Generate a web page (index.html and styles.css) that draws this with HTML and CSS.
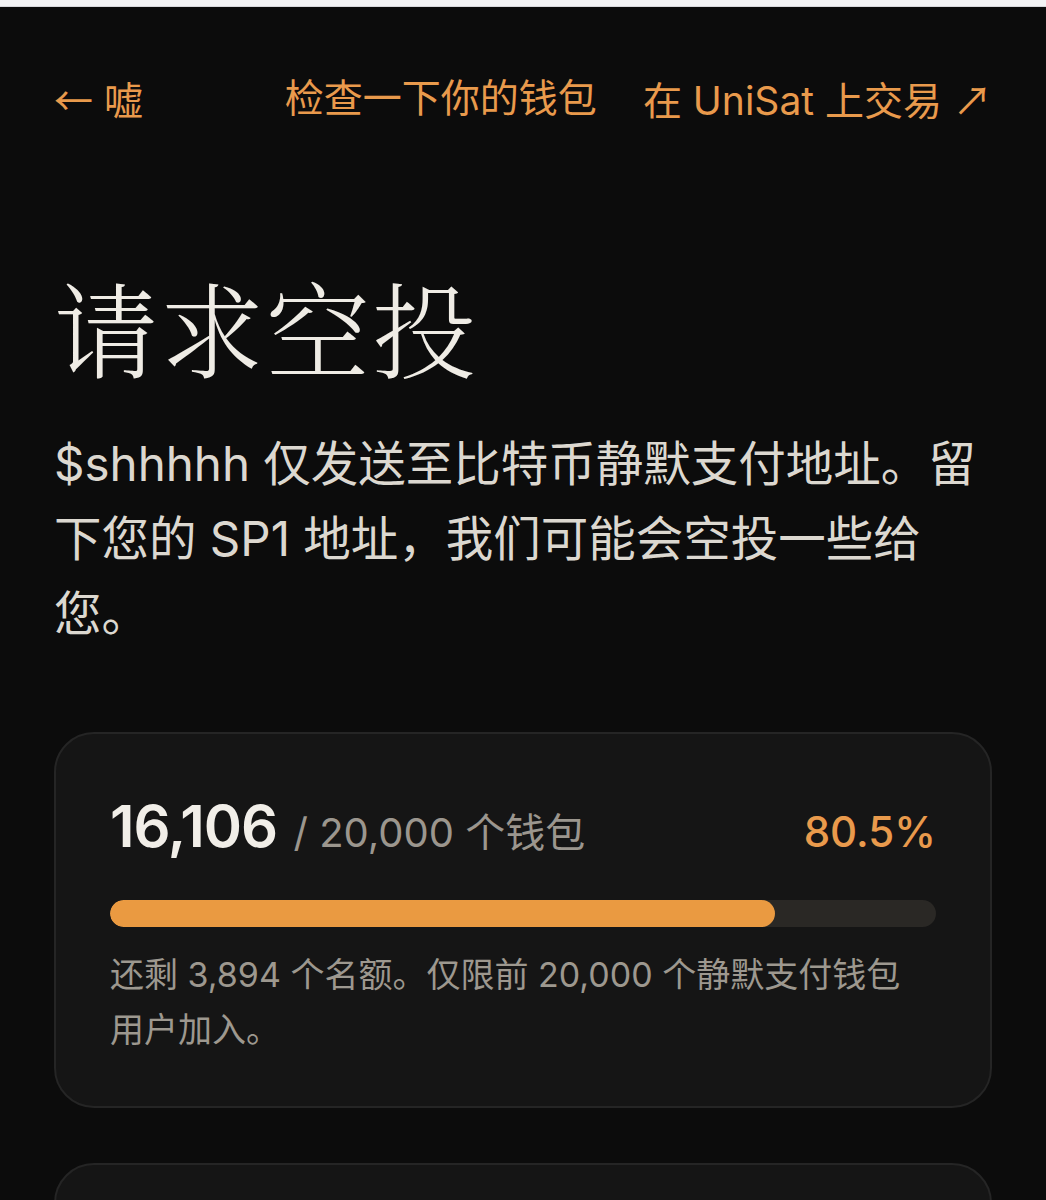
FILE: index.html
```html
<!DOCTYPE html>
<html lang="zh-CN">
<head>
    <meta charset="UTF-8">
    <meta name="viewport" content="width=device-width, initial-scale=1.0">
    <title>请求空投</title>
    <link rel="stylesheet" href="styles.css">
</head>
<body>
    <div class="top-strip"></div>
    <div class="page">
        <nav class="nav">
            <a class="nav-link" href="#"><span class="arrow">←</span> 嘘</a>
            <div class="nav-right">
                <a class="nav-link" href="#">检查一下你的钱包</a>
                <a class="nav-link" href="#">在 UniSat 上交易 <span class="arrow">↗</span></a>
            </div>
        </nav>

        <h1 class="title">请求空投</h1>
        <p class="intro">$shhhhh 仅发送至比特币静默支付地址。留下您的 SP1 地址，我们可能会空投一些给您。</p>

        <div class="card">
            <div class="count-row">
                <div class="count">
                    <span class="count-num">16,106</span>
                    <span class="count-total">/ 20,000 个钱包</span>
                </div>
                <span class="count-pct">80.5%</span>
            </div>
            <div class="bar">
                <div class="bar-fill" style="width: 80.5%"></div>
            </div>
            <p class="card-note">还剩 3,894 个名额。仅限前 20,000 个静默支付钱包用户加入。</p>
        </div>

        <div class="card card-next"></div>
    </div>
</body>
</html>
```

FILE: styles.css
```css
body {
    margin: 0;
    padding: 0;
    background-color: #0c0c0c;
    color: #eeebe4;
    font-family: Inter, "Noto Sans CJK SC", sans-serif;
}
.top-strip {
    height: 6px;
    background-color: #f3f3f5;
    border-bottom: 1px solid #d8d8dc;
}
.page {
    padding: 0 54px;
}
.nav {
    display: flex;
    justify-content: space-between;
    align-items: center;
    padding-top: 66px;
    font-size: 39px;
    line-height: 1.3;
}
.nav-right {
    display: flex;
    gap: 46px;
}
.nav-link {
    color: #e99a4c;
    text-decoration: none;
}
.arrow {
    font-family: "Noto Sans CJK SC", sans-serif;
    font-weight: 400;
}
.title {
    margin: 137px 0 0;
    font-family: "Noto Serif CJK SC", "Noto Sans CJK SC", serif;
    font-weight: 300;
    font-size: 104px;
    line-height: 1.2;
    letter-spacing: 2px;
    color: #efece5;
}
.intro {
    margin: 38px 0 0;
    font-size: 47.5px;
    line-height: 75px;
    color: #dcd8d0;
}
.card {
    margin-top: 81px;
    background-color: #151515;
    border: 2px solid #252525;
    border-radius: 40px;
    padding: 56px 54px 49px 54px;
}
.count-row {
    display: flex;
    justify-content: space-between;
    align-items: baseline;
}
.count-num {
    font-size: 58px;
    font-weight: 600;
    line-height: 72px;
    color: #f1eee8;
    letter-spacing: -1px;
}
.count-total {
    margin-left: 12px;
    font-size: 40px;
    color: #9b968e;
}
.count-pct {
    font-size: 42px;
    font-weight: 500;
    color: #e99a4c;
}
.bar {
    margin-top: 38px;
    height: 27px;
    border-radius: 14px;
    background-color: #2a2825;
    overflow: hidden;
}
.bar-fill {
    height: 100%;
    border-radius: 14px;
    background-color: #ea9a41;
}
.card-note {
    margin: 20px 0 0;
    padding-right: 20px;
    font-size: 34px;
    line-height: 55px;
    color: #9d988f;
}
.card-next {
    margin-top: 55px;
    height: 200px;
}
```
